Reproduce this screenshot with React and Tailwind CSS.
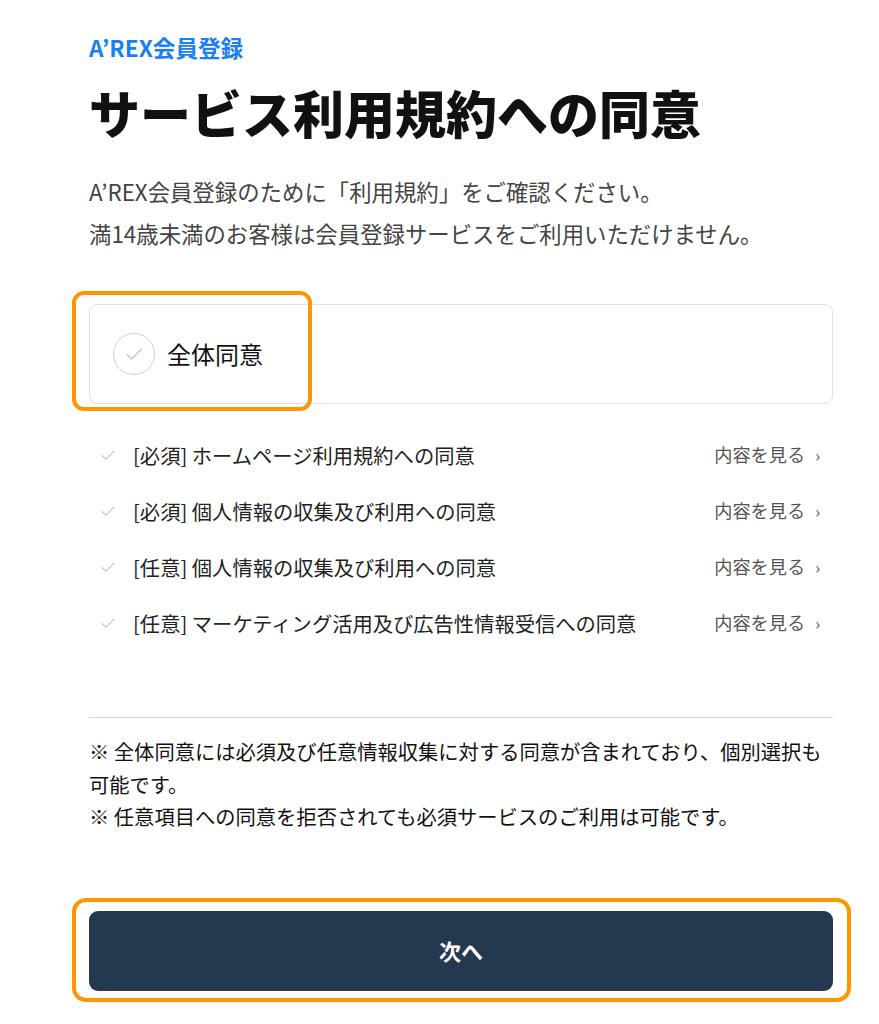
import React from 'react';

const FONT = { fontFamily: '"Noto Sans CJK JP", "Noto Sans", sans-serif' };

const terms = [
  '[必須] ホームページ利用規約への同意',
  '[必須] 個人情報の収集及び利用への同意',
  '[任意] 個人情報の収集及び利用への同意',
  '[任意] マーケティング活用及び広告性情報受信への同意',
];

const Check = ({ className }) => (
  <svg viewBox="0 0 24 24" fill="none" className={className}>
    <path d="M5 12.5l4.5 4.5L19 7.5" stroke="currentColor" strokeWidth="1.6" strokeLinecap="round" strokeLinejoin="round" />
  </svg>
);

const TermRow = ({ label }) => (
  <div className="flex h-[56px] items-center justify-between">
    <div className="flex items-center">
      <Check className="ml-[9px] h-[20px] w-[20px] text-[#c9ccd2]" />
      <span className="ml-[15px] text-[20.3px] text-[#222]">{label}</span>
    </div>
    <button className="mr-[13px] flex items-center text-[18.2px] text-[#555]">
      内容を見る
      <span className="ml-[10px] text-[16px]">›</span>
    </button>
  </div>
);

export default function App() {
  return (
    <div className="min-h-screen bg-white" style={FONT}>
      <div className="ml-[89px] w-[744px] pt-[32px]">
        <p className="text-[22.6px] font-bold leading-[32px] text-[#1a7ff2]">A’REX会員登録</p>
        <h1 className="mt-4 text-[51px] font-black leading-[64px] text-[#111]">
          サービス利用規約への同意
        </h1>
        <p className="mt-[26px] text-[22.4px] leading-[42px] text-[#444]">
          A’REX会員登録のために「利用規約」をご確認ください。
          <br />
          満14歳未満のお客様は会員登録サービスをご利用いただけません。
        </p>

        {/* all-agree box */}
        <div className="relative mt-[50px]">
          <div className="flex h-[100px] items-center rounded-[8px] border border-[#dfe1e6] pl-[23px]">
            <span className="flex h-[42px] w-[42px] items-center justify-center rounded-full border-[1.5px] border-[#cdd0d5]">
              <Check className="h-[24px] w-[24px] text-[#c6cad1]" />
            </span>
            <span className="ml-[12px] text-[24px] text-[#111]">全体同意</span>
          </div>
          <div className="pointer-events-none absolute -left-[17px] -top-[13px] h-[120px] w-[240px] rounded-[12px] border-[4px] border-[#ff9500]" />
        </div>

        <div className="mt-[23px]">
          {terms.map((t) => (
            <TermRow key={t} label={t} />
          ))}
        </div>

        <div className="mt-[66px] h-px bg-[#cfd3d8]" />

        <p className="mt-[17px] text-[20.3px] leading-[32.5px] text-[#111]">
          ※ 全体同意には必須及び任意情報収集に対する同意が含まれており、個別選択も
          <br />
          可能です。
          <br />
          ※ 任意項目への同意を拒否されても必須サービスのご利用は可能です。
        </p>

        <div className="relative mt-[78px]">
          <button className="flex h-[80px] w-full items-center justify-center rounded-[9px] bg-[#243850] text-[22px] font-bold text-white">
            次へ
          </button>
          <div className="pointer-events-none absolute -bottom-[11px] -left-[17px] -right-[18px] -top-[13px] rounded-[14px] border-[4px] border-[#ff9500]" />
        </div>
      </div>
    </div>
  );
}
